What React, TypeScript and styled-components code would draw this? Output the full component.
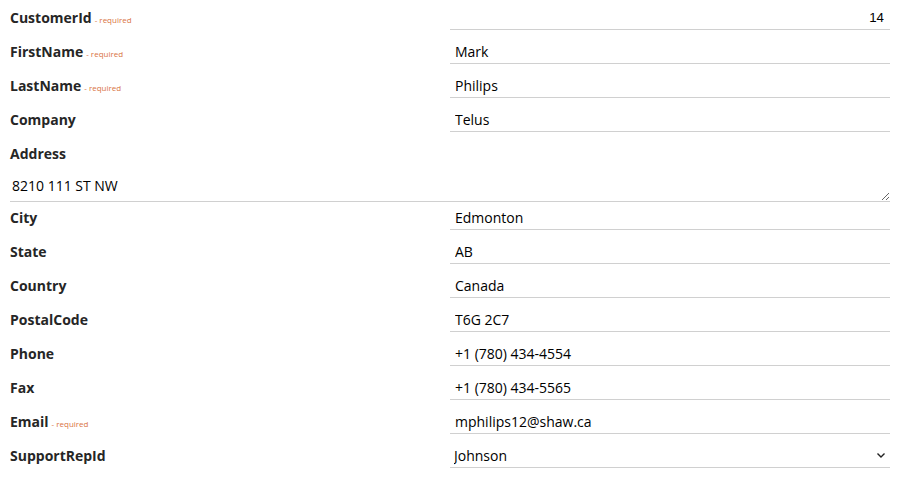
import React from "react";
import styled, { createGlobalStyle } from "styled-components";

const Global = createGlobalStyle`
  html, body { margin: 0; padding: 0; background: #fff; }
  body { font-family: "Open Sans", "Noto Sans", sans-serif; }
  * { box-sizing: border-box; }
`;

const Form = styled.form`
  width: 900px;
  padding: 0 10px;
  display: flex;
  flex-direction: column;
`;

const Row = styled.div`
  display: grid;
  grid-template-columns: 1fr 1fr;
  align-items: center;
  height: 34px;
  padding: 4px 0;
`;

const LabelRow = styled.div`
  display: flex;
  align-items: center;
  height: 34px;
`;

const Label = styled.label`
  font-family: "Open Sans", sans-serif;
  font-weight: 700;
  font-size: 14px;
  color: #262626;
  white-space: nowrap;
`;

const Req = styled.span`
  font-weight: 400;
  font-size: 8px;
  color: #d9733f;
  margin-left: 3px;
`;

const Input = styled.input<{ $numeric?: boolean }>`
  width: 100%;
  height: 26px;
  border: none;
  border-bottom: 1px solid #d0d0d0;
  outline: none;
  padding: 2px ${(p) => (p.$numeric ? "6px" : "0")} 0 5px;
  text-align: ${(p) => (p.$numeric ? "right" : "left")};
  font-family: ${(p) => (p.$numeric ? '"Liberation Sans", Arial, sans-serif' : '"Open Sans", sans-serif')};
  font-size: ${(p) => (p.$numeric ? "13.3px" : "14px")};
  font-weight: ${(p) => (p.$numeric ? 400 : 500)};
  color: #000;
  background: #fff;
  -moz-appearance: textfield;
  &::-webkit-inner-spin-button,
  &::-webkit-outer-spin-button { -webkit-appearance: none; margin: 0; }
`;

const TextArea = styled.textarea`
  display: block;
  width: 100%;
  height: 32px;
  margin-bottom: -2px;
  border: none;
  border-bottom: 1px solid #d0d0d0;
  outline: none;
  padding: 6px 2px 0;
  font-family: "Open Sans", sans-serif;
  font-size: 14px;
  font-weight: 400;
  color: #000;
  resize: vertical;
  overflow: hidden;
  line-height: 20px;
`;

const SelectWrap = styled.div`
  position: relative;
  width: 100%;
`;

const Select = styled.select`
  width: 100%;
  height: 26px;
  appearance: none;
  -webkit-appearance: none;
  border: none;
  border-bottom: 1px solid #d0d0d0;
  border-radius: 0;
  outline: none;
  padding: 2px 20px 0 4px;
  font-family: "Open Sans", sans-serif;
  font-size: 14px;
  font-weight: 500;
  color: #000;
  background: #fff;
`;

const Chevron = styled.svg`
  position: absolute;
  right: 4px;
  top: 9px;
  pointer-events: none;
`;

type Field = { name: string; value: string; required?: boolean; numeric?: boolean };

const before: Field[] = [
  { name: "CustomerId", value: "14", required: true, numeric: true },
  { name: "FirstName", value: "Mark", required: true },
  { name: "LastName", value: "Philips", required: true },
  { name: "Company", value: "Telus" },
];

const after: Field[] = [
  { name: "City", value: "Edmonton" },
  { name: "State", value: "AB" },
  { name: "Country", value: "Canada" },
  { name: "PostalCode", value: "T6G 2C7" },
  { name: "Phone", value: "+1 (780) 434-4554" },
  { name: "Fax", value: "+1 (780) 434-5565" },
  { name: "Email", value: "mphilips12@shaw.ca", required: true },
];

const FieldRow = ({ f }: { f: Field }) => (
  <Row>
    <Label htmlFor={f.name}>
      {f.name}
      {f.required && <Req>- required</Req>}
    </Label>
    <Input
      id={f.name}
      type={f.numeric ? "number" : "text"}
      $numeric={f.numeric}
      defaultValue={f.value}
    />
  </Row>
);

export default function App() {
  return (
    <>
      <Global />
      <Form onSubmit={(e) => e.preventDefault()}>
        {before.map((f) => (
          <FieldRow key={f.name} f={f} />
        ))}
        <LabelRow>
          <Label htmlFor="Address">Address</Label>
        </LabelRow>
        <TextArea id="Address" defaultValue="8210 111 ST NW" />
        {after.map((f) => (
          <FieldRow key={f.name} f={f} />
        ))}
        <Row>
          <Label htmlFor="SupportRepId">SupportRepId</Label>
          <SelectWrap>
            <Select id="SupportRepId" defaultValue="Johnson">
              <option>Johnson</option>
              <option>Peacock</option>
              <option>Park</option>
            </Select>
            <Chevron width="10" height="8" viewBox="0 0 10 8">
              <path d="M1.5 2.5 L5 6 L8.5 2.5" fill="none" stroke="#222" strokeWidth="1.4" />
            </Chevron>
          </SelectWrap>
        </Row>
      </Form>
    </>
  );
}
